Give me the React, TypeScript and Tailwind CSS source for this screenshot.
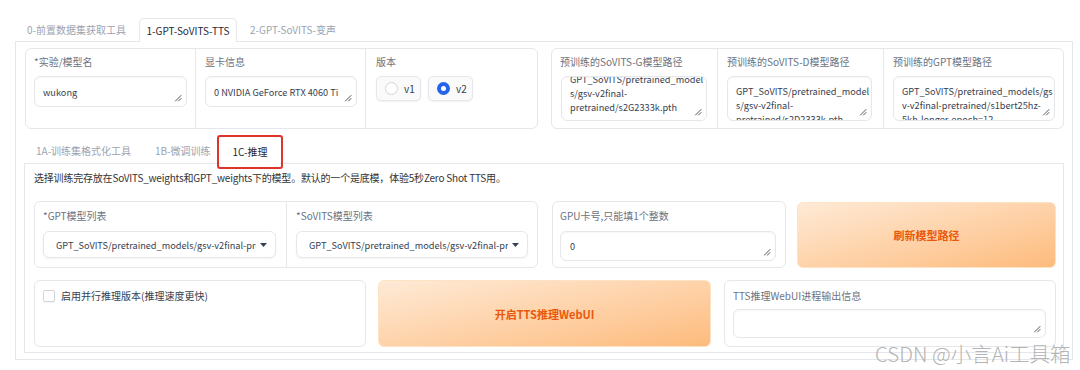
import React from "react";

const Resize = () => (
  <svg className="absolute right-[4px] bottom-[4px]" width="8" height="8" viewBox="0 0 8 8">
    <path d="M7 1.5L1.5 7M7 4.5L4.5 7" stroke="#555" strokeWidth="1" strokeLinecap="round" />
  </svg>
);

const Label = ({ children }: { children: React.ReactNode }) => (
  <div className="text-[#6b7280] leading-[14px] h-[14px] whitespace-nowrap">{children}</div>
);

const Box = ({ w, h, children, className = "" }: { w: string; h: string; children?: React.ReactNode; className?: string }) => (
  <div
    className={`relative ${w} ${h} border border-[#e5e7eb] rounded-[6px] bg-white shadow-[inset_0_1px_2px_rgba(0,0,0,0.04)] overflow-hidden text-[#374151] text-[9.2px] ${className}`}
  >
    {children}
    <Resize />
  </div>
);

const Caret = () => (
  <svg width="7" height="4" viewBox="0 0 7 4" className="shrink-0">
    <path d="M0 0H7L3.5 4Z" fill="#374151" />
  </svg>
);

export default function App() {
  return (
    <div className="w-[1080px] h-[370px] bg-white relative overflow-hidden font-['Noto_Sans_CJK_SC','Noto_Sans',sans-serif] text-[10px] leading-[14px] text-[#374151]">
      <div className="pt-[18px] pl-[15px] pr-[7px]">
        {/* top tabs */}
        <div className="flex h-[23px] items-stretch">
          <div className="w-[124px] pl-[12px] flex items-center text-[#9ca3af] whitespace-nowrap">0-前置数据集获取工具</div>
          <div className="w-[98px] flex items-center justify-center text-[#1f2937] border border-b-0 border-[#e5e7eb] rounded-t-[5px] bg-white relative z-10 -mb-px whitespace-nowrap">
            1-GPT-SoVITS-TTS
          </div>
          <div className="pl-[13px] flex items-center text-[#9ca3af] whitespace-nowrap">2-GPT-SoVITS-变声</div>
        </div>

        {/* outer panel */}
        <div className="border border-[#e5e7eb] h-[319px] px-[9px] pt-[6px]">
          {/* row 1 */}
          <div className="flex gap-[13px]">
            <div className="flex w-[513px] h-[81px] border border-[#e5e7eb] rounded-[6px] bg-white">
              <div className="w-[169px] pl-[8px] pt-[6px]">
                <Label>*实验/模型名</Label>
                <Box w="w-[153px]" h="h-[31px]" className="mt-[7px] px-[8px] flex items-center">wukong</Box>
              </div>
              <div className="w-[170px] border-l border-[#e5e7eb] pl-[9px] pt-[6px]">
                <Label>显卡信息</Label>
                <Box w="w-[152px]" h="h-[31px]" className="mt-[7px] px-[8px] flex items-center whitespace-nowrap">
                  0 NVIDIA GeForce RTX 4060 Ti
                </Box>
              </div>
              <div className="w-[172px] border-l border-[#e5e7eb] pl-[10px] pt-[6px]">
                <Label>版本</Label>
                <div className="mt-[7px] flex gap-[7px]">
                  <div className="w-[45px] h-[25px] border border-[#e5e7eb] rounded-[5px] bg-[#fafafa] shadow-[0_1px_2px_rgba(0,0,0,0.05)] flex items-center pl-[8px] gap-[6px]">
                    <span className="w-[13px] h-[13px] rounded-full border border-[#d1d5db] bg-white" />
                    <span>v1</span>
                  </div>
                  <div className="w-[45px] h-[25px] border border-[#e5e7eb] rounded-[5px] bg-[#fafafa] shadow-[0_1px_2px_rgba(0,0,0,0.05)] flex items-center pl-[8px] gap-[6px]">
                    <span className="w-[13px] h-[13px] rounded-full bg-[#2563eb] flex items-center justify-center">
                      <span className="w-[5px] h-[5px] rounded-full bg-white" />
                    </span>
                    <span>v2</span>
                  </div>
                </div>
              </div>
            </div>

            <div className="flex w-[513px] h-[81px] border border-[#e5e7eb] rounded-[6px] bg-white">
              <div className="w-[165px] pl-[8px] pt-[6px]">
                <Label>预训练的SoVITS-G模型路径</Label>
                <Box w="w-[146px]" h="h-[45px]" className="mt-[7px] ml-[1px] px-[8px]">
                  <div className="-mt-[5px] leading-[14px] whitespace-nowrap">
                    <div>GPT_SoVITS/pretrained_model</div>
                    <div>s/gsv-v2final-</div>
                    <div>pretrained/s2G2333k.pth</div>
                  </div>
                </Box>
              </div>
              <div className="w-[166px] border-l border-[#e5e7eb] pl-[9px] pt-[6px]">
                <Label>预训练的SoVITS-D模型路径</Label>
                <Box w="w-[145px]" h="h-[45px]" className="mt-[7px] px-[8px]">
                  <div className="pt-[7px] leading-[14px] whitespace-nowrap">
                    <div>GPT_SoVITS/pretrained_model</div>
                    <div>s/gsv-v2final-</div>
                    <div>pretrained/s2D2333k.pth</div>
                  </div>
                </Box>
              </div>
              <div className="w-[180px] border-l border-[#e5e7eb] pl-[9px] pt-[6px]">
                <Label>预训练的GPT模型路径</Label>
                <Box w="w-[162px]" h="h-[45px]" className="mt-[7px] px-[8px]">
                  <div className="pt-[7px] leading-[14px] whitespace-nowrap">
                    <div>GPT_SoVITS/pretrained_models/gs</div>
                    <div>v-v2final-pretrained/s1bert25hz-</div>
                    <div>5kh-longer-epoch=12-</div>
                  </div>
                </Box>
              </div>
            </div>
          </div>

          {/* sub tabs */}
          <div className="mt-[10px] h-[24px] flex items-stretch -ml-px">
            <div className="w-[119px] pl-[12px] flex items-center text-[#9ca3af] whitespace-nowrap">1A-训练集格式化工具</div>
            <div className="w-[77px] pl-[12px] flex items-center text-[#9ca3af] whitespace-nowrap">1B-微调训练</div>
            <div className="relative w-[60px] flex items-center justify-center text-[#1f2937] bg-white z-10 -mb-px whitespace-nowrap">
              1C-推理
              <span className="absolute left-[-3px] right-[-3px] top-[-4px] bottom-[-5px] border-[2.5px] border-[#e0342b] rounded-[3px]" />
            </div>
          </div>

          {/* sub panel */}
          <div className="-mx-px border border-[#e5e7eb] h-[190px] pl-[9px] pt-[7px]">
            <div className="text-[#333] whitespace-nowrap tracking-[-0.2px]">
              选择训练完存放在SoVITS_weights和GPT_weights下的模型。默认的一个是底模，体验5秒Zero Shot TTS用。
            </div>

            {/* row A */}
            <div className="mt-[16px] flex h-[67px]">
              <div className="flex w-[504px] h-[67px] border border-[#e5e7eb] rounded-[6px] bg-white">
                <div className="w-[251px] pl-[8px] pt-[7px]">
                  <Label>*GPT模型列表</Label>
                  <div className="mt-[8px] w-[233px] h-[27px] border border-[#e5e7eb] rounded-[6px] bg-white shadow-[0_1px_2px_rgba(0,0,0,0.05)] flex items-center pl-[12px] pr-[8px] text-[9.2px]">
                    <span className="overflow-hidden whitespace-nowrap w-[202px]">GPT_SoVITS/pretrained_models/gsv-v2final-pretrained</span>
                    <span className="ml-[4px]"><Caret /></span>
                  </div>
                </div>
                <div className="w-[251px] border-l border-[#e5e7eb] pl-[9px] pt-[7px]">
                  <Label>*SoVITS模型列表</Label>
                  <div className="mt-[8px] w-[232px] h-[27px] border border-[#e5e7eb] rounded-[6px] bg-white shadow-[0_1px_2px_rgba(0,0,0,0.05)] flex items-center pl-[12px] pr-[8px] text-[9.2px]">
                    <span className="overflow-hidden whitespace-nowrap w-[201px]">GPT_SoVITS/pretrained_models/gsv-v2final-pretrained</span>
                    <span className="ml-[4px]"><Caret /></span>
                  </div>
                </div>
              </div>

              <div className="ml-[14px] w-[234px] h-[67px] border border-[#e5e7eb] rounded-[6px] bg-white pl-[7px] pt-[7px]">
                <Label>GPU卡号,只能填1个整数</Label>
                <Box w="w-[216px]" h="h-[30px]" className="mt-[8px] px-[9px] flex items-center">0</Box>
              </div>

              <div className="ml-[11px] w-[259px] h-[66px] mt-[1px] rounded-[6px] bg-gradient-to-br from-[#feead6] to-[#fdbb7c] border border-[#fde2c4] flex items-center justify-center text-[#ea580c] font-semibold text-[11px]">
                刷新模型路径
              </div>
            </div>

            {/* row B */}
            <div className="mt-[12px] flex h-[67px]">
              <div className="w-[332px] h-[67px] border border-[#e5e7eb] rounded-[6px] bg-white pl-[8px] pt-[8px]">
                <div className="flex items-center gap-[6px]">
                  <span className="w-[12px] h-[12px] rounded-[2px] border border-[#d1d5db] bg-white shadow-[0_1px_1px_rgba(0,0,0,0.05)]" />
                  <span className="text-[#374151]">启用并行推理版本(推理速度更快)</span>
                </div>
              </div>

              <div className="ml-[12px] w-[333px] h-[67px] rounded-[6px] bg-gradient-to-br from-[#feead6] to-[#fdbb7c] border border-[#fde2c4] flex items-center justify-center text-[#ea580c] font-semibold text-[11px]">
                开启TTS推理WebUI
              </div>

              <div className="ml-[13px] w-[332px] h-[67px] border border-[#e5e7eb] rounded-[6px] bg-white pl-[8px] pt-[8px]">
                <Label>TTS推理WebUI进程输出信息</Label>
                <Box w="w-[313px]" h="h-[29px]" className="mt-[6px]" />
              </div>
            </div>
          </div>
        </div>
      </div>

      {/* watermark */}
      <div className="absolute left-[875px] top-[341px] text-[20.5px] leading-[24px] text-[#b4b4b4] whitespace-nowrap font-['Noto_Sans_CJK_SC',sans-serif] font-light">
        CSDN @小言Ai工具箱
      </div>
    </div>
  );
}
